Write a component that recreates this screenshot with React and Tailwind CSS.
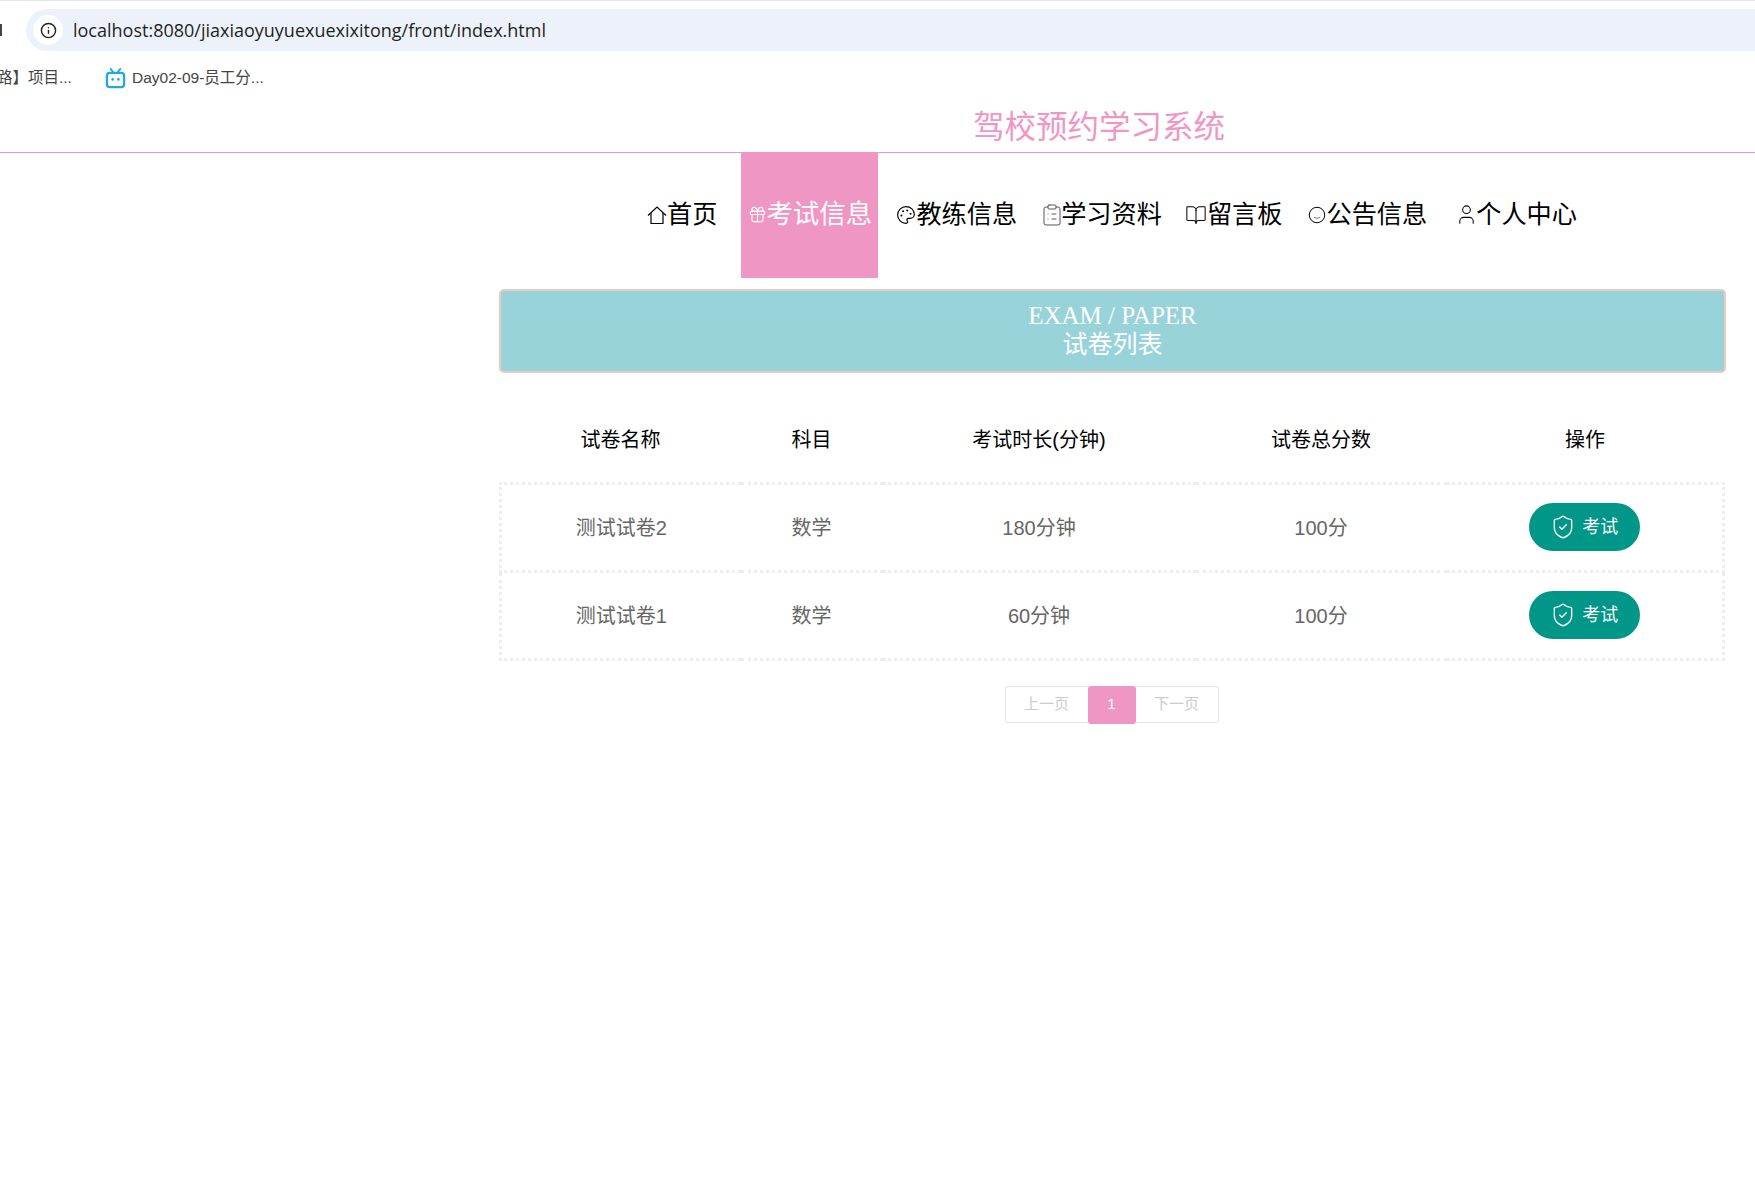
import React from 'react';
import { Info, ShieldCheck, Palette, ClipboardList, BookOpen, Gift, User } from 'lucide-react';

// nav icons that lucide has no close match for
const HomeIcon = () => (
    <svg viewBox="0 0 20 20" className="w-[20px] h-[20px]" fill="none" stroke="currentColor" strokeWidth="1.2">
        <path d="M1 10.5 L10 2 L19 10.5" />
        <path d="M4 8 V18.5 H16 V8" />
    </svg>
);

const FaceIcon = () => (
    <svg viewBox="0 0 20 20" className="w-[18px] h-[18px]" fill="none" stroke="currentColor" strokeWidth="1.1">
        <circle cx="10" cy="10" r="8.6" />
        <path d="M6.5 12.5 Q10 15 13.5 12.5" stroke="#777" />
    </svg>
);

const BiliIcon = () => (
    <svg viewBox="0 0 22 22" className="w-[21px] h-[21px]" fill="none">
        <path d="M6 1 L9 5 M16 1 L13 5" stroke="#1ea9e1" strokeWidth="2" strokeLinecap="round" />
        <rect x="2" y="5" width="18" height="15" rx="3" stroke="#1ea9e1" strokeWidth="2.4" fill="#fff" />
        <circle cx="8" cy="12" r="1.4" fill="#1ea9e1" />
        <circle cx="14" cy="12" r="1.4" fill="#1ea9e1" />
    </svg>
);

const navItems = [
    { label: '首页', icon: <HomeIcon />, box: '', gap: 'w-[20px]', text: '' },
    { label: '考试信息', icon: <Gift size={19} strokeWidth={1.4} className="shrink-0 -ml-[1px]" />, box: 'ml-[24px] pl-[9px] pr-[6px] bg-[#f096c4] text-white', gap: 'w-[16px]', text: 'text-[26.5px]' },
    { label: '教练信息', icon: <Palette size={20} strokeWidth={1.4} className="shrink-0" />, box: 'ml-[18px]', gap: 'w-[20px]', text: '' },
    { label: '学习资料', icon: <ClipboardList size={24} strokeWidth={1} className="shrink-0 text-[#555566]" />, box: 'ml-[25px]', gap: 'w-[19px]', text: '' },
    { label: '留言板', icon: <BookOpen size={22} strokeWidth={1.1} className="shrink-0" />, box: 'ml-[24px]', gap: 'w-[21px]', text: '' },
    { label: '公告信息', icon: <FaceIcon />, box: 'ml-[25px]', gap: 'w-[19px]', text: '' },
    { label: '个人中心', icon: <User size={23} strokeWidth={1.1} className="shrink-0 -ml-[1px]" />, box: 'ml-[31px]', gap: 'w-[18px]', text: '' },
];

const papers = [
    { name: '测试试卷2', subject: '数学', time: '180分钟', score: '100分' },
    { name: '测试试卷1', subject: '数学', time: '60分钟', score: '100分' },
];

const headers = ['试卷名称', '科目', '考试时长(分钟)', '试卷总分数', '操作'];

const App = () => {
    return (
        <div className="min-h-screen bg-white overflow-hidden font-['Liberation_Sans','Noto_Sans_CJK_SC',sans-serif]">
            {/* browser chrome */}
            <div className="h-px bg-[#dee3ec]" />
            <div className="flex items-center mt-[8px] h-[42px]">
                <div className="w-[2px] h-[12px] bg-[#444] mr-[24px]" />
                <div className="flex-1 h-[42px] rounded-l-[21px] bg-[#edf2fa] flex items-center pl-[7px]">
                    <div className="w-[30px] h-[30px] rounded-full bg-white flex items-center justify-center text-[#222]">
                        <Info size={17} strokeWidth={2} />
                    </div>
                    <span className="ml-[10px] text-[18px] text-[#1f1f1f] font-['Open_Sans',sans-serif]">
                        localhost:8080/jiaxiaoyuyuexuexixitong/front/index.html
                    </span>
                </div>
            </div>
            <div className="flex items-center h-[34px] mt-[10px] text-[15.5px] text-[#444]">
                <span className="-ml-[3px] w-[108px] whitespace-nowrap">路】项目...</span>
                <BiliIcon />
                <span className="ml-[6px] whitespace-nowrap">Day02-09-员工分...</span>
            </div>

            {/* title */}
            <div className="h-[58px] border-b border-[#f196c4] flex justify-center pt-[12px] pl-[443px]">
                <span className="text-[31.5px] leading-[40px] text-[#f096c4]">驾校预约学习系统</span>
            </div>

            {/* nav */}
            <nav className="flex h-[125px] pl-[647px] text-[25.2px] text-black">
                {navItems.map((item) => (
                    <a key={item.label} className={`flex items-center pb-[2px] ${item.box}`}>
                        <span className={`flex items-center justify-center ${item.gap}`}>{item.icon}</span>
                        <span className={`whitespace-nowrap ${item.text}`}>{item.label}</span>
                    </a>
                ))}
            </nav>

            <div className="ml-[499px] w-[1227px] mt-[11px]">
                {/* banner */}
                <div className="h-[84px] rounded-[5px] border-2 border-[#e9cbc0] bg-[#98d3d9] flex flex-col items-center justify-center pb-[3px] text-white">
                    <div className="text-[25px] leading-[29px] font-['Liberation_Serif','Noto_Sans_CJK_SC',serif]">EXAM / PAPER</div>
                    <div className="text-[25px] leading-[29px] font-['Liberation_Serif','Noto_Sans_CJK_SC',serif]">试卷列表</div>
                </div>

                {/* paper list */}
                <table className="mt-[22px] w-[1226px] table-fixed border-collapse">
                    <thead>
                        <tr className="h-[88px] text-[20px] text-black">
                            <th className="w-[240px] font-normal pt-[4px]">{headers[0]}</th>
                            <th className="w-[142px] font-normal pt-[4px]">{headers[1]}</th>
                            <th className="w-[313px] font-normal pt-[4px]">{headers[2]}</th>
                            <th className="w-[251px] font-normal pt-[4px]">{headers[3]}</th>
                            <th className="font-normal pt-[4px]">{headers[4]}</th>
                        </tr>
                    </thead>
                    <tbody>
                        {papers.map((paper) => (
                            <tr key={paper.name} className="h-[88px] text-[20px] text-[#666] text-center border-y-[3px] border-x-[3px] border-dotted border-[#eeeeee]">
                                <td className="pt-[1px]">{paper.name}</td>
                                <td className="pt-[1px]">{paper.subject}</td>
                                <td className="pt-[1px]">{paper.time}</td>
                                <td className="pt-[1px]">{paper.score}</td>
                                <td>
                                    <button className="w-[111px] h-[48px] rounded-full bg-[#009688] text-white text-[18px] inline-flex items-center justify-center gap-[6px]">
                                        <ShieldCheck size={26} strokeWidth={1.3} />
                                        考试
                                    </button>
                                </td>
                            </tr>
                        ))}
                    </tbody>
                </table>

                {/* pager */}
                <div className="flex justify-center mt-[25px] pr-[2px]">
                    <div className="flex items-center">
                        <div className="w-[83px] h-[37px] border border-r-0 border-[#e6e6e6] rounded-l-[3px] flex items-center justify-center text-[15px] text-[#cccccc]">上一页</div>
                        <div className="w-[48px] h-[38px] rounded-[3px] bg-[#f096c4] flex items-center justify-center text-[15px] text-white">1</div>
                        <div className="w-[83px] h-[37px] border border-l-0 border-[#e6e6e6] rounded-r-[3px] flex items-center justify-center text-[15px] text-[#cccccc]">下一页</div>
                    </div>
                </div>
            </div>
        </div>
    );
};

export default App;
